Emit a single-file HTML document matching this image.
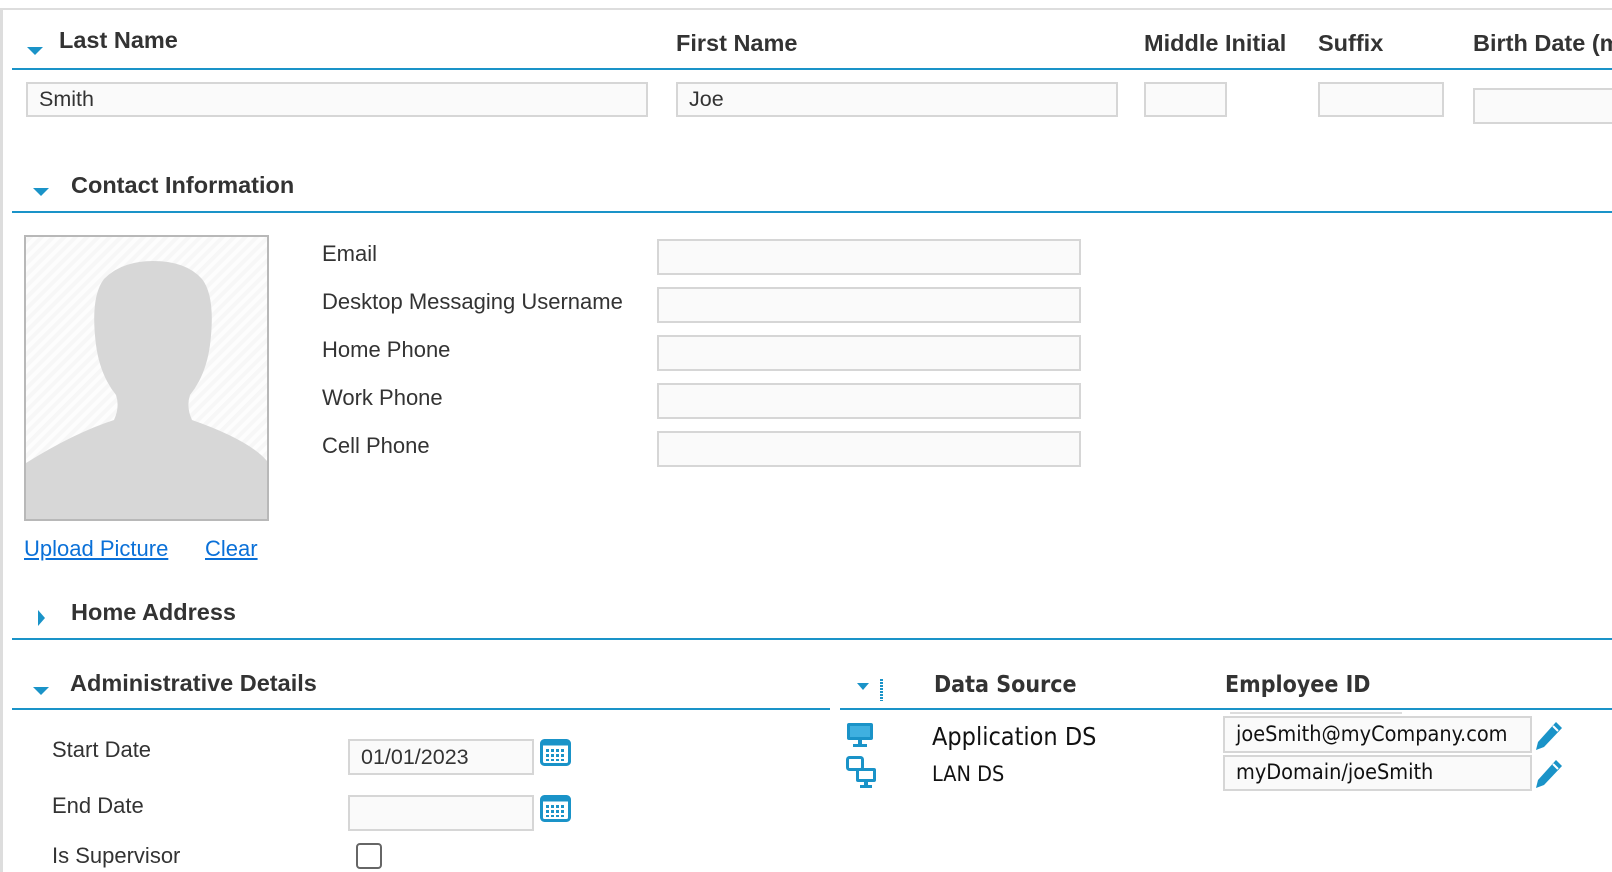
<!DOCTYPE html>
<html><head><meta charset="utf-8"><style>
body{margin:0;width:1612px;height:872px;background:#fff;position:relative;overflow:hidden;font-family:"Liberation Sans",Arial,sans-serif;color:#333}
.a{position:absolute;white-space:nowrap}
.h{font-weight:bold;font-size:23.5px;color:#333}
.l{font-size:22px;color:#333}
.in{position:absolute;box-sizing:border-box;background:#fafafa;border:2px solid #d6d6d6;font-size:21.5px;color:#333;padding-left:11px;line-height:31px}
.line{position:absolute;height:2px;background:#1a93c8}
.tri{position:absolute;width:0;height:0;border-left:8px solid transparent;border-right:8px solid transparent;border-top:8px solid #1a93c8}
.trr{position:absolute;width:0;height:0;border-top:8px solid transparent;border-bottom:8px solid transparent;border-left:7px solid #1a93c8}
a{color:#0a70d8}
.g{font-family:"DejaVu Sans Condensed","Liberation Sans Narrow","Liberation Sans",sans-serif;color:#111}
</style></head><body>
<div class="a" style="left:0;top:8px;width:1612px;height:2px;background:#ddd"></div>
<div class="a" style="left:0;top:8px;width:3px;height:864px;background:#ddd"></div>

<div class="tri" style="left:27px;top:47px"></div>
<div class="a h" style="left:59px;top:27px">Last Name</div>
<div class="a h" style="left:676px;top:30px">First Name</div>
<div class="a h" style="left:1144px;top:30px">Middle Initial</div>
<div class="a h" style="left:1318px;top:30px">Suffix</div>
<div class="a h" style="left:1473px;top:30px">Birth Date (m</div>
<div class="line" style="left:12px;top:68px;width:1600px"></div>
<div class="in" style="left:26px;top:82px;width:622px;height:35px">Smith</div>
<div class="in" style="left:676px;top:82px;width:442px;height:35px">Joe</div>
<div class="in" style="left:1144px;top:82px;width:83px;height:35px"></div>
<div class="in" style="left:1318px;top:82px;width:126px;height:35px"></div>
<div class="in" style="left:1473px;top:88px;width:160px;height:36px"></div>

<div class="tri" style="left:33px;top:188px"></div>
<div class="a h" style="left:71px;top:172px">Contact Information</div>
<div class="line" style="left:12px;top:211px;width:1600px"></div>

<svg class="a" style="left:24px;top:235px" width="245" height="286" viewBox="0 0 245 286">
<defs><pattern id="p" width="8" height="8" patternUnits="userSpaceOnUse" patternTransform="rotate(45)"><rect width="8" height="8" fill="#f7f7f7"/><rect width="4" height="8" fill="#fdfdfd"/></pattern></defs>
<rect x="1" y="1" width="243" height="284" fill="url(#p)" stroke="#b8b8b8" stroke-width="2"/>
<path d="M2 228 Q50 198 90 185 Q96 172 92 160 Q76 140 72 110 Q66 62 80 44 Q98 26 129 26 Q162 26 178 44 Q192 62 186 110 Q182 140 166 160 Q162 172 168 185 Q225 205 243 226 L243 284 L2 284 Z" fill="#d7d7d7"/>
</svg>
<div class="a l" style="left:24px;top:536px"><a style="text-decoration:underline">Upload Picture</a></div>
<div class="a l" style="left:205px;top:536px"><a style="text-decoration:underline">Clear</a></div>

<div class="a l" style="left:322px;top:241px">Email</div>
<div class="a l" style="left:322px;top:289px">Desktop Messaging Username</div>
<div class="a l" style="left:322px;top:337px">Home Phone</div>
<div class="a l" style="left:322px;top:385px">Work Phone</div>
<div class="a l" style="left:322px;top:433px">Cell Phone</div>
<div class="in" style="left:657px;top:239px;width:424px;height:36px"></div>
<div class="in" style="left:657px;top:287px;width:424px;height:36px"></div>
<div class="in" style="left:657px;top:335px;width:424px;height:36px"></div>
<div class="in" style="left:657px;top:383px;width:424px;height:36px"></div>
<div class="in" style="left:657px;top:431px;width:424px;height:36px"></div>

<div class="trr" style="left:38px;top:610px"></div>
<div class="a h" style="left:71px;top:599px">Home Address</div>
<div class="line" style="left:12px;top:638px;width:1600px"></div>

<div class="tri" style="left:33px;top:687px"></div>
<div class="a h" style="left:70px;top:670px">Administrative Details</div>
<div class="line" style="left:12px;top:708px;width:818px"></div>

<div class="a l" style="left:52px;top:737px">Start Date</div>
<div class="a l" style="left:52px;top:793px">End Date</div>
<div class="a l" style="left:52px;top:843px">Is Supervisor</div>
<div class="in" style="left:348px;top:739px;width:186px;height:36px;line-height:32px">01/01/2023</div>
<div class="in" style="left:348px;top:795px;width:186px;height:36px"></div>
<svg class="a" style="left:540px;top:739px" width="31" height="27" viewBox="0 0 31 27"><rect x="1.5" y="1.5" width="28" height="24" rx="3" fill="#fff" stroke="#1a93c8" stroke-width="3"/><rect x="1.5" y="1.5" width="28" height="5" fill="#1a93c8"/><g fill="#1a93c8"><rect x="6" y="10" width="3" height="3"/><rect x="11" y="10" width="3" height="3"/><rect x="16" y="10" width="3" height="3"/><rect x="21" y="10" width="3" height="3"/><rect x="6" y="15" width="3" height="3"/><rect x="11" y="15" width="3" height="3"/><rect x="16" y="15" width="3" height="3"/><rect x="21" y="15" width="3" height="3"/><rect x="6" y="20" width="3" height="2"/><rect x="11" y="20" width="3" height="2"/><rect x="16" y="20" width="3" height="2"/><rect x="21" y="20" width="3" height="2"/></g></svg>
<svg class="a" style="left:540px;top:795px" width="31" height="27" viewBox="0 0 31 27"><rect x="1.5" y="1.5" width="28" height="24" rx="3" fill="#fff" stroke="#1a93c8" stroke-width="3"/><rect x="1.5" y="1.5" width="28" height="5" fill="#1a93c8"/><g fill="#1a93c8"><rect x="6" y="10" width="3" height="3"/><rect x="11" y="10" width="3" height="3"/><rect x="16" y="10" width="3" height="3"/><rect x="21" y="10" width="3" height="3"/><rect x="6" y="15" width="3" height="3"/><rect x="11" y="15" width="3" height="3"/><rect x="16" y="15" width="3" height="3"/><rect x="21" y="15" width="3" height="3"/><rect x="6" y="20" width="3" height="2"/><rect x="11" y="20" width="3" height="2"/><rect x="16" y="20" width="3" height="2"/><rect x="21" y="20" width="3" height="2"/></g></svg>
<div class="a" style="left:356px;top:843px;width:22px;height:22px;border:2px solid #666;border-radius:4px"></div>

<div class="tri" style="left:857px;top:683px;border-left-width:6px;border-right-width:6px;border-top-width:7px"></div>
<div class="a" style="left:880px;top:679px;width:3px;height:22px;background:repeating-linear-gradient(#1a93c8 0 2px,transparent 2px 3px)"></div>
<div class="a h g" style="left:934px;top:672px;font-size:23px;font-weight:bold;color:#333">Data Source</div>
<div class="a h g" style="left:1225px;top:672px;font-size:23px;font-weight:bold;color:#333">Employee ID</div>
<div class="line" style="left:840px;top:708px;width:772px"></div>

<svg class="a" style="left:846px;top:722px" width="28" height="26" viewBox="0 0 28 26"><rect x="1" y="1" width="26" height="17" rx="2" fill="#1a93c8"/><rect x="4" y="4" width="20" height="11" fill="#3fb0e0"/><rect x="12" y="18" width="4" height="4" fill="#1a93c8"/><rect x="7" y="22" width="14" height="3" fill="#1a93c8"/></svg>
<svg class="a" style="left:846px;top:756px" width="32" height="32" viewBox="0 0 32 32"><rect x="1.5" y="1.5" width="15" height="12" rx="2" fill="none" stroke="#1a93c8" stroke-width="3"/><rect x="10" y="12" width="20" height="14" rx="2" fill="#1a93c8"/><rect x="13" y="15" width="14" height="8" fill="#fff"/><rect x="18" y="26" width="4" height="3" fill="#1a93c8"/><rect x="14" y="29" width="12" height="3" fill="#1a93c8"/></svg>
<div class="a g" style="left:932px;top:722px;font-size:25px">Application DS</div>
<div class="a g" style="left:932px;top:762px;font-size:21.5px">LAN DS</div>
<div class="a" style="left:1230px;top:712px;width:172px;height:2px;background:#ddd"></div>
<div class="in g" style="left:1223px;top:716px;width:309px;height:37px;font-size:21.5px;color:#111;line-height:33px">joeSmith@myCompany.com</div>
<div class="in g" style="left:1223px;top:755px;width:309px;height:36px;font-size:21.5px;color:#111;line-height:32px">myDomain/joeSmith</div>
<svg class="a" style="left:1534px;top:720px" width="30" height="32" viewBox="0 0 30 32"><path d="M22 2 L28 8 L10 27 L2 30 L4 22 Z" fill="#1a93c8"/><path d="M19 6 L24 11" stroke="#fff" stroke-width="2"/></svg>
<svg class="a" style="left:1534px;top:758px" width="30" height="32" viewBox="0 0 30 32"><path d="M22 2 L28 8 L10 27 L2 30 L4 22 Z" fill="#1a93c8"/><path d="M19 6 L24 11" stroke="#fff" stroke-width="2"/></svg>
</body></html>
